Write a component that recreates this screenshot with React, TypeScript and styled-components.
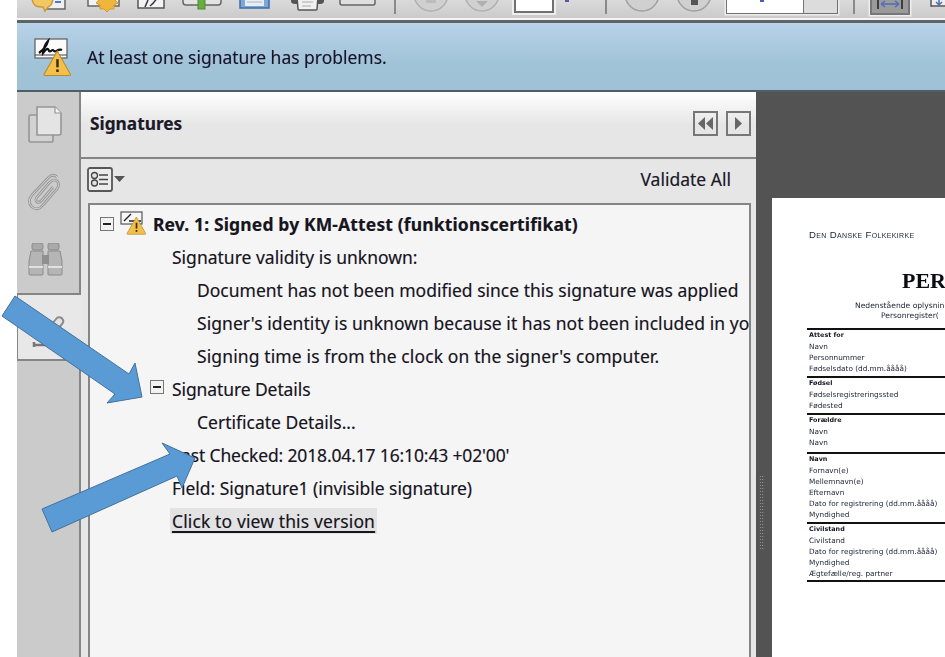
import React from "react";
import styled, { createGlobalStyle } from "styled-components";

const Global = createGlobalStyle`
  html, body { margin: 0; padding: 0; background: #fff; }
  body { font-family: "Noto Sans", "Liberation Sans", sans-serif; color: #16161e; }
`;

const Page = styled.div`
  position: relative; width: 945px; height: 657px; overflow: hidden; background: #fff;
`;
const Shell = styled.div`
  margin-left: 17px; height: 657px; display: flex; flex-direction: column; filter: blur(0.35px);
  text-shadow: 0.5px 0 rgba(190, 90, 0, 0.22), -0.5px 0 rgba(0, 60, 200, 0.22);
`;
const Toolbar = styled.div`
  height: 20px; padding-left: 14px; display: flex; align-items: flex-start; overflow: hidden; flex: none;
  background: linear-gradient(#dadada, #c9c9c9);
  border-bottom: 3px solid #5d6468;
  box-shadow: inset 0 -2px 0 #f4f4f4;
`;
const Tool = styled.svg<{ $ml: number }>`
  flex: none; display: block; margin-left: ${(p) => p.$ml}px;
`;
const Sep = styled.div<{ $ml: number }>`
  flex: none; width: 2px; height: 14px; background: #8a8a8a; margin-left: ${(p) => p.$ml}px;
`;
const PageBox = styled.div`
  flex: none; margin-left: 14px; width: 36px; height: 11px; background: #fff; border: 2px solid #707070; border-top: 0;
  box-shadow: 0 0 0 2px #eee;
`;
const Mark = styled.div<{ $ml: number; $color: string }>`
  flex: none; width: 4px; height: 2px; margin-left: ${(p) => p.$ml}px; background: ${(p) => p.$color};
`;
const ZoomBox = styled.div`
  flex: none; margin-left: 14px; width: 110px; height: 13px; display: flex; border: 1px solid #707070; border-top: 0;
  box-shadow: 0 0 0 1.5px #eee; background: #fff;
`;
const ZoomArrow = styled.div`
  margin-left: auto; width: 33px; background: #dcdcdc; border-left: 1px solid #777;
`;
const FitButton = styled.div`
  flex: none; margin-left: 15px; width: 36px; height: 13px; background: #9b9b9b; border: 2px solid #777; border-top: 0;
  box-shadow: 0 0 0 1.5px #eee; display: flex; justify-content: center;
`;
const InfoBar = styled.div`
  flex: none; height: 69px; display: flex; align-items: center; box-sizing: border-box; padding-left: 17px; gap: 15px;
  background: linear-gradient(#b8d2e8, #a0c3d8 62%, #9ec1d5);
  border-bottom: 2px solid #4d5e68;
`;
const InfoText = styled.span`
  font-size: 17.5px; line-height: 24px; letter-spacing: -0.02px; color: #14142a;
`;
const Main = styled.div`
  flex: 1; min-height: 0; display: flex;
`;
const TabRail = styled.div`
  flex: none; width: 64px; display: flex; flex-direction: column; background: #cbcbcb; border-right: 2px solid #858585; box-sizing: border-box;
`;
const Tab = styled.div<{ $top?: number }>`
  height: 67px; display: flex; justify-content: center; padding-top: ${(p) => p.$top ?? 14}px; padding-right: 6px; box-sizing: border-box;
`;
const ActiveTab = styled.div`
  flex: none; width: 64px; height: 68px; box-sizing: border-box; background: #e8e8e8;
  border-top: 2px solid #858585; border-bottom: 2px solid #858585; border-left: 1px solid #858585;
  margin-right: -2px; position: relative; z-index: 1; padding: 20px 0 0 8px;
`;
const Panel = styled.div`
  flex: none; width: 675px; display: flex; flex-direction: column; background: #e6e6e6;
`;
const PanelHead = styled.div`
  flex: none; height: 67px; box-sizing: border-box; padding: 0 5px 0 9px; display: flex; align-items: center; gap: 8px;
  background: linear-gradient(#fff, #e6e6e6 50%);
  border-bottom: 2px solid #858585;
`;
const PanelTitle = styled.span`
  font-size: 17.3px; font-weight: 700; margin-right: auto; color: #1a1a28; margin-top: -2px;
`;
const NavButton = styled.div`
  width: 25px; height: 25px; box-sizing: border-box; border: 2px solid #777; display: flex; align-items: center; justify-content: center; margin-top: -3px;
`;
const PanelTools = styled.div`
  flex: none; height: 44px; box-sizing: border-box; padding: 0 25px 3px 6px; display: flex; align-items: center; justify-content: space-between;
`;
const ValidateAll = styled.span`
  font-size: 17.5px; color: #1a1a28; margin-top: -2px;
`;
const Tree = styled.div`
  flex: 1; margin: 0 5px 0 7px; min-height: 0; box-sizing: border-box; background: #f5f5f5; padding-top: 3px;
  border: 2px solid #858585; border-bottom: 0; overflow: hidden; white-space: nowrap;
`;
const Row = styled.div<{ $indent: number; $track?: number }>`
  height: 33px; display: flex; align-items: center; font-size: 17.5px; color: #16161e;
  padding-left: ${(p) => p.$indent}px; letter-spacing: ${(p) => p.$track ?? 0}px;
`;
const RootRow = styled(Row)`
  height: 32px; box-sizing: border-box; padding-bottom: 1px;
`;
const Toggle = styled.div`
  flex: none; width: 14px; height: 14px; box-sizing: border-box; border: 1.5px solid #777; background: #f2f2f2; margin: -4px 8px 0 0;
  display: flex; align-items: center; justify-content: center;
  &::after { content: ""; width: 8px; height: 2px; background: #222; }
`;
const RootToggle = styled(Toggle)`
  margin: 0 6px 0 0;
`;
const RootLabel = styled.span`
  font-weight: 700; margin-left: 7px;
`;
const VersionLink = styled.span`
  display: inline-block; margin-left: -2px; padding: 0 2px; line-height: 26px; background: #e3e3e3;
  text-decoration: underline; text-underline-offset: 3px; text-decoration-thickness: 1.5px;
`;
const DocArea = styled.div`
  flex: 1; min-width: 0; display: flex; background: #535353; overflow: hidden;
`;
const Splitter = styled.div`
  flex: none; width: 16px; padding: 383px 0 0 3px; box-sizing: border-box;
`;
const Grip = styled.div`
  width: 6px; height: 75px;
  background-image: radial-gradient(#aaaaaa 0.6px, transparent 0.8px);
  background-size: 2.5px 3px;
`;
const Sheet = styled.div`
  flex: 1; margin-top: 106px; background: #fff; padding: 31px 0 0 35px; overflow: hidden; white-space: nowrap;
  font-family: "DejaVu Sans", sans-serif; font-size: 7.3px; line-height: 11px; color: #20283a;
  filter: blur(0.4px);
  text-shadow: none;
`;
const Church = styled.div`
  padding-left: 2px; font-family: "Liberation Sans", sans-serif; font-variant: small-caps; font-size: 9.6px; letter-spacing: 0.35px;
`;
const Heading = styled.div`
  margin: 30px 0 0 95px; font-family: "Liberation Serif", serif; font-weight: 700; font-size: 22px; line-height: 22px; color: #0c0c14;
`;
const SubLine = styled.div<{ $indent: number }>`
  padding-left: ${(p) => p.$indent}px; line-height: 9.5px; font-size: 7.6px;
`;
const Subs = styled.div`
  margin: 9px 0 8px;
`;
const Section = styled.div<{ $pad?: number }>`
  border-top: 2px solid #111; padding: 0 0 ${(p) => p.$pad ?? 2}px 2px;
`;
const SectionHead = styled.div`
  font-weight: 700; font-size: 6.4px; color: #14141f;
`;
const ArrowLayer = styled.svg`
  position: absolute; left: 0; top: 0; pointer-events: none;
`;

const Warn = ({ x, y, s }: { x: number; y: number; s: number }) => (
  <g transform={`translate(${x} ${y}) scale(${s})`}>
    <path d="M13 0 L26 23 Q26 24 25 24 L1 24 Q0 24 0 23 Z" fill="#f2c04a" stroke="#b98b2e" strokeWidth="1" />
    <rect x="12" y="8" width="2.4" height="8" fill="#3a2c10" />
    <rect x="12" y="18" width="2.4" height="2.6" fill="#3a2c10" />
  </g>
);

const clipPath = "M30 4 C27 1 24 2 21 5 L5 22 C1 27 2 31 5 34 C9 37 13 36 16 32 L30 16 C32 13 32 10 30 8 C27 6 25 7 22 10 L10 24 C8 27 9 28 10 29 C12 30 13 29 15 27 L26 14";

const App = () => (
  <Page>
    <Global />
    <Shell>
      <Toolbar>
        <Tool $ml={0} width="35" height="14" viewBox="0 0 35 14">
          <rect x="16" y="-4" width="18" height="13" fill="#f0f0f0" stroke="#666" strokeWidth="1.5" />
          <rect x="24" y="1" width="6" height="2" fill="#3f7fd0" />
          <path d="M1 -3 Q1 7 10 7 L12 7 L14 11 L17 7 Q22 5 22 -3 Z" fill="#f3c765" stroke="#c99a3a" strokeWidth="1.5" />
        </Tool>
        <Tool $ml={21} width="34" height="14" viewBox="0 0 34 14">
          <rect x="1" y="-4" width="31" height="10" fill="#f3f3f3" stroke="#666" strokeWidth="1.5" />
          <path d="M20 -7 L23 -3 L28 -4 L28 0 L31 3 L27 5 L27 9 L23 9 L20 12 L17 9 L13 9 L13 5 L9 3 L12 0 L12 -4 L17 -3 Z" fill="#f0b53c" stroke="#d59a2a" strokeWidth="1" />
        </Tool>
        <Tool $ml={16} width="28" height="10" viewBox="0 0 28 10">
          <rect x="1" y="-4" width="26" height="12" fill="#f3f3f3" stroke="#555" strokeWidth="1.5" />
          <path d="M8 7 L11 0 M13 6 Q17 3 20 -2" stroke="#334" strokeWidth="1.5" fill="none" />
        </Tool>
        <Tool $ml={17} width="40" height="11" viewBox="0 0 40 11">
          <path d="M1 -2 L1 2 Q1 5 4 5 L36 5 Q39 5 39 2 L39 -2" fill="#e4e4e4" stroke="#666" strokeWidth="1.5" />
          <rect x="16" y="-2" width="7" height="11" fill="#67ad3f" stroke="#4c8c2b" strokeWidth="1" />
        </Tool>
        <Tool $ml={17} width="31" height="10" viewBox="0 0 31 10">
          <rect x="1" y="-4" width="29" height="12" fill="#7ea6d6" stroke="#3c6ea8" strokeWidth="1.5" />
          <rect x="6" y="-4" width="19" height="10" fill="#e8edf4" />
          <path d="M8 2 H23" stroke="#aab6c6" strokeWidth="1" />
        </Tool>
        <Tool $ml={20} width="35" height="11" viewBox="0 0 35 11">
          <path d="M1 -3 H34 V1 Q34 4 30 4 H5 Q1 4 1 1 Z" fill="#555" />
          <path d="M7 -3 H28 L27 9 Q27 10 26 10 H9 Q8 10 8 9 Z" fill="#f1f1f1" stroke="#555" strokeWidth="1.5" />
          <path d="M12 2 H23 M12 6 H21" stroke="#aaa" strokeWidth="1" />
        </Tool>
        <Tool $ml={14} width="37" height="6" viewBox="0 0 37 6">
          <path d="M1 -4 V3 Q1 5 3 5 H34 Q36 5 36 3 V-4" fill="#dedede" stroke="#666" strokeWidth="1.5" />
        </Tool>
        <Sep $ml={18} />
        <Tool $ml={17} width="36" height="12" viewBox="0 0 36 12">
          <circle cx="18" cy="-6" r="17" fill="#d0d0d0" stroke="#b0b0b0" strokeWidth="1.5" />
          <rect x="13" y="0" width="10" height="3" fill="#bdbdbd" />
        </Tool>
        <Tool $ml={15} width="36" height="12" viewBox="0 0 36 12">
          <circle cx="18" cy="-6" r="17" fill="#d0d0d0" stroke="#b0b0b0" strokeWidth="1.5" />
          <path d="M12 1 H24 L18 7 Z" fill="#b0b0b0" />
        </Tool>
        <PageBox />
        <Mark $ml={11} $color="#6a50a0" />
        <Sep $ml={36} />
        <Tool $ml={17} width="36" height="12" viewBox="0 0 36 12">
          <circle cx="18" cy="-6" r="17" fill="#d0d0d0" stroke="#a0a0a0" strokeWidth="1.5" />
        </Tool>
        <Tool $ml={16} width="36" height="12" viewBox="0 0 36 12">
          <circle cx="18" cy="-6" r="17" fill="#d0d0d0" stroke="#a0a0a0" strokeWidth="1.5" />
          <rect x="15" y="-2" width="7" height="7" fill="#555" />
        </Tool>
        <ZoomBox><Mark $ml={33} $color="#4a60b0" /><ZoomArrow /></ZoomBox>
        <Sep $ml={15} />
        <FitButton>
          <svg width="26" height="11" viewBox="0 0 26 11">
            <path d="M1 -2 V9 M25 -2 V9" stroke="#222" strokeWidth="1.5" />
            <path d="M4 4 H22 M4 4 L8 1 M4 4 L8 7 M22 4 L18 1 M22 4 L18 7" stroke="#4e6fc0" strokeWidth="1.5" fill="none" />
          </svg>
        </FitButton>
        <Tool $ml={20} width="20" height="8" viewBox="0 0 20 8">
          <rect x="1" y="-5" width="22" height="11" fill="#eee" stroke="#555" strokeWidth="1.5" />
          <path d="M9 -2 V4 M6 2 L9 5 L12 2" stroke="#4e6fc0" strokeWidth="1.5" fill="none" />
        </Tool>
      </Toolbar>
      <InfoBar>
        <svg width="38" height="38" viewBox="0 0 38 38">
          <rect x="1" y="1" width="32" height="19" fill="#fbfbfb" stroke="#666" strokeWidth="1.3" />
          <path d="M1 17 H33" stroke="#444" strokeWidth="1" />
          <path d="M5 15 C9 12 13 7 14 3 C12 5 9 11 9 15 C12 11 14 9 15 13 C17 15 18 10 20 13 C22 15 24 10 28 12" fill="none" stroke="#111" strokeWidth="2.2" />
          <Warn x={10} y={13} s={1.02} />
        </svg>
        <InfoText>At least one signature has problems.</InfoText>
      </InfoBar>
      <Main>
        <TabRail>
          <Tab>
            <svg width="34" height="37" viewBox="0 0 34 37">
              <rect x="1" y="9" width="24" height="27" rx="1.5" fill="#d2d2d2" stroke="#969696" strokeWidth="1.6" />
              <path d="M9 1 H27 L33 7 V27 Q33 29 31 29 H9 Z" fill="#e4e4e4" stroke="#969696" strokeWidth="1.6" />
              <path d="M27 1 V7 H33" fill="#f4f4f4" stroke="#969696" strokeWidth="1.2" />
            </svg>
          </Tab>
          <Tab>
            <svg width="36" height="38" viewBox="0 0 36 38">
              <path d={clipPath} fill="none" stroke="#999" strokeWidth="2.8" />
              <path d={clipPath} fill="none" stroke="#d4d4d4" strokeWidth="1" />
            </svg>
          </Tab>
          <Tab $top={17}>
            <svg width="35" height="33" viewBox="0 0 35 33">
              <rect x="4" y="0" width="11" height="7" rx="2" fill="#a9a9a9" stroke="#8b8b8b" />
              <rect x="20" y="0" width="11" height="7" rx="2" fill="#a9a9a9" stroke="#8b8b8b" />
              <path d="M3 8 H15 V31 Q15 32 14 32 H2 Q1 32 1 31 V18 Z" fill="#b5b5b5" stroke="#8b8b8b" />
              <path d="M20 8 H32 L34 18 V31 Q34 32 33 32 H21 Q20 32 20 31 Z" fill="#b5b5b5" stroke="#8b8b8b" />
              <rect x="14" y="12" width="7" height="9" fill="#8f8f8f" />
              <path d="M1 24 H15 M20 24 H34" stroke="#efefef" strokeWidth="1.5" />
            </svg>
          </Tab>
          <ActiveTab>
            <svg width="40" height="34" viewBox="0 0 40 34">
              <path d="M14 24 L30 4 C32 1 36 2 37 5 C38 7 37 8 36 9 L20 28 Z" fill="#e3e3e3" stroke="#8c8c8c" strokeWidth="2" />
              <path d="M8 30 H24 M8 27 V32" stroke="#777" strokeWidth="2.5" />
            </svg>
          </ActiveTab>
        </TabRail>
        <Panel>
          <PanelHead>
            <PanelTitle>Signatures</PanelTitle>
            <NavButton>
              <svg width="17" height="13" viewBox="0 0 17 13"><path d="M8 0 V13 L1 6.5 Z M16 0 V13 L9 6.5 Z" fill="#666" /></svg>
            </NavButton>
            <NavButton>
              <svg width="9" height="13" viewBox="0 0 9 13"><path d="M1 0 V13 L8 6.5 Z" fill="#666" /></svg>
            </NavButton>
          </PanelHead>
          <PanelTools>
            <svg width="39" height="25" viewBox="0 0 39 25">
              <rect x="1" y="1" width="24" height="23" rx="2" fill="#ececec" stroke="#565656" strokeWidth="1.8" />
              <circle cx="7.5" cy="8.5" r="3" fill="#e2e2e2" stroke="#444" strokeWidth="1.3" />
              <circle cx="7.5" cy="16" r="3" fill="#e2e2e2" stroke="#444" strokeWidth="1.3" />
              <path d="M12 8 H21 M12 12.5 H21 M12 17 H21" stroke="#444" strokeWidth="1.4" />
              <path d="M27 9 H38 L32.5 15 Z" fill="#555" />
            </svg>
            <ValidateAll>Validate All</ValidateAll>
          </PanelTools>
          <Tree>
            <RootRow $indent={10} $track={0.14}>
              <RootToggle />
              <svg width="26" height="26" viewBox="0 0 26 26">
                <rect x="1" y="1" width="21" height="12" fill="#f7f7f7" stroke="#555" strokeWidth="1.2" />
                <path d="M4 10 L11 3 M9 10 H21" stroke="#222" strokeWidth="1.4" />
                <Warn x={7} y={6} s={0.72} />
              </svg>
              <RootLabel>Rev. 1: Signed by KM-Attest (funktionscertifikat)</RootLabel>
            </RootRow>
            <Row $indent={82}>Signature validity is unknown:</Row>
            <Row $indent={107}>Document has not been modified since this signature was applied</Row>
            <Row $indent={107} $track={0.05}>Signer's identity is unknown because it has not been included in your list of trusted certificates</Row>
            <Row $indent={107} $track={0.12}>Signing time is from the clock on the signer's computer.</Row>
            <Row $indent={60} $track={-0.1}><Toggle />Signature Details</Row>
            <Row $indent={107}>Certificate Details...</Row>
            <Row $indent={82} $track={-0.15}>Last Checked: 2018.04.17 16:10:43 +02'00'</Row>
            <Row $indent={82} $track={-0.05}>Field: Signature1 (invisible signature)</Row>
            <Row $indent={82} $track={0.12}><VersionLink>Click to view this version</VersionLink></Row>
          </Tree>
        </Panel>
        <DocArea>
          <Splitter><Grip /></Splitter>
          <Sheet>
            <Church>Den Danske Folkekirke</Church>
            <Heading>PER</Heading>
            <Subs>
              <SubLine $indent={48}>Nedenstående oplysninger</SubLine>
              <SubLine $indent={74}>Personregister(</SubLine>
            </Subs>
            <Section>
              <SectionHead>Attest for</SectionHead>
              <div>Navn</div>
              <div>Personnummer</div>
              <div>Fødselsdato (dd.mm.åååå)</div>
            </Section>
            <Section>
              <SectionHead>Fødsel</SectionHead>
              <div>Fødselsregistreringssted</div>
              <div>Fødested</div>
            </Section>
            <Section $pad={4}>
              <SectionHead>Forældre</SectionHead>
              <div>Navn</div>
              <div>Navn</div>
            </Section>
            <Section>
              <SectionHead>Navn</SectionHead>
              <div>Fornavn(e)</div>
              <div>Mellemnavn(e)</div>
              <div>Efternavn</div>
              <div>Dato for registrering (dd.mm.åååå)</div>
              <div>Myndighed</div>
            </Section>
            <Section $pad={1}>
              <SectionHead>Civilstand</SectionHead>
              <div>Civilstand</div>
              <div>Dato for registrering (dd.mm.åååå)</div>
              <div>Myndighed</div>
              <div>Ægtefælle/reg. partner</div>
            </Section>
            <Section />
          </Sheet>
        </DocArea>
      </Main>
    </Shell>
    <ArrowLayer width="945" height="657" viewBox="0 0 945 657">
      <polygon points="15,296 129,374 135,363 142,397 107,403 115,394 2,316" fill="#5b9bd5" stroke="#41719c" strokeWidth="1" />
      <polygon points="42,509 170,454 162,443 195,458 182,488 177,476 52,532" fill="#5b9bd5" stroke="#41719c" strokeWidth="1" />
    </ArrowLayer>
  </Page>
);

export default App;
